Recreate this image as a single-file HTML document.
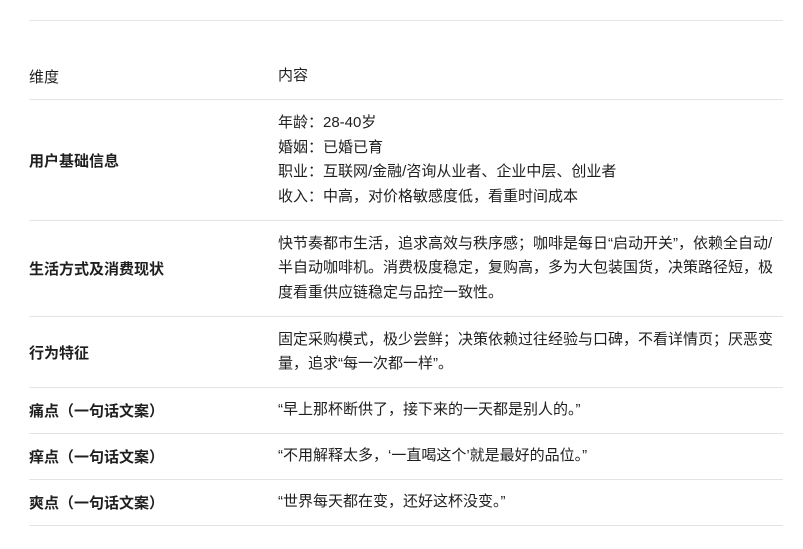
<!DOCTYPE html>
<html><head><meta charset="utf-8"><style>
body{margin:0;background:#fff;font-family:"Liberation Sans","Noto Sans CJK SC",sans-serif;font-size:15px;color:#1f1f1f;}
.top{position:absolute;left:29px;top:20px;width:754px;height:1px;background:#e5e5e5;}
.row{position:absolute;left:29px;width:754px;border-bottom:1px solid #e3e3e3;display:flex;align-items:center;box-sizing:border-box;}
.k{width:249px;flex:0 0 249px;font-weight:bold;}
.v{flex:1;min-width:0;line-height:24.5px;white-space:nowrap;}
.h .k{font-weight:normal;}
</style></head><body>
<div class="top"></div>
<div class="row h" style="top:54px;height:46px"><div class="k">维度</div><div class="v">内容</div></div>
<div class="row" style="top:100px;height:121px"><div class="k">用户基础信息</div><div class="v">年龄：28-40岁<br>婚姻：已婚已育<br>职业：互联网/金融/咨询从业者、企业中层、创业者<br>收入：中高，对价格敏感度低，看重时间成本</div></div>
<div class="row" style="top:221px;height:96px"><div class="k">生活方式及消费现状</div><div class="v">快节奏都市生活，追求高效与秩序感；咖啡是每日“启动开关”，依赖全自动/<br>半自动咖啡机。消费极度稳定，复购高，多为大包装国货，决策路径短，极<br>度看重供应链稳定与品控一致性。</div></div>
<div class="row" style="top:317px;height:71px"><div class="k">行为特征</div><div class="v">固定采购模式，极少尝鲜；决策依赖过往经验与口碑，不看详情页；厌恶变<br>量，追求“每一次都一样”。</div></div>
<div class="row" style="top:388px;height:46px"><div class="k">痛点（一句话文案）</div><div class="v">“早上那杯断供了，接下来的一天都是别人的。”</div></div>
<div class="row" style="top:434px;height:46px"><div class="k">痒点（一句话文案）</div><div class="v">“不用解释太多，‘一直喝这个’就是最好的品位。”</div></div>
<div class="row" style="top:480px;height:46px"><div class="k">爽点（一句话文案）</div><div class="v">“世界每天都在变，还好这杯没变。”</div></div>
</body></html>
